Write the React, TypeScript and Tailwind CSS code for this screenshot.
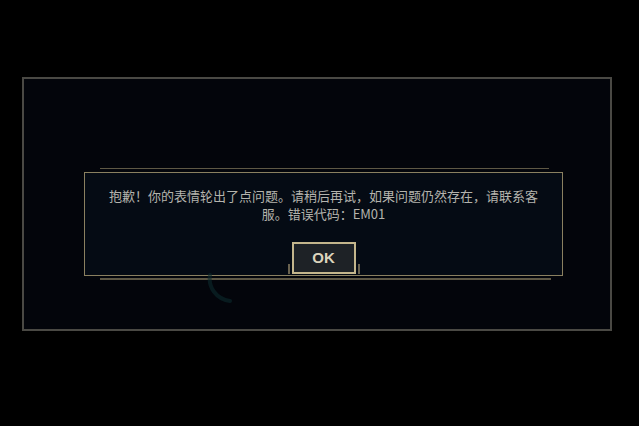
export default function App() {
  return (
    <div className="w-[639px] h-[426px] bg-black pt-[77px] pl-[22px] font-['Noto_Sans_CJK_SC','Noto_Sans',sans-serif]">
      {/* Outer frame */}
      <div className="relative w-[590px] h-[254px] border-2 border-[#4a4944] bg-[#03050b] pt-[89px] pl-[60px]">
        {/* faint teal arc in the background */}
        <svg className="absolute left-[180px] top-[194px]" width="40" height="36" viewBox="0 0 40 36">
          <path d="M6 2 C 4 14, 12 26, 26 28" fill="none" stroke="#0c2a2d" strokeWidth="4" strokeLinecap="round" opacity="0.6" />
        </svg>

        {/* Dialog */}
        <div className="w-[479px] flex flex-col gap-[3px]">
          <div className="h-px mx-[16px] mr-[14px] bg-[#5e5845]" />

          <div className="h-[104px] border border-[#8a8060] bg-[#050b14] pt-[14px] flex flex-col items-center">
            <p className="text-[13px] leading-[18px] text-[#b4b3ad] text-center">
              抱歉！你的表情轮出了点问题。请稍后再试，如果问题仍然存在，请联系客
              <br />
              服。错误代码：EM01
            </p>

            <div className="mt-[19px] flex items-end gap-[2px]">
              <div className="w-[2px] h-[10px] bg-[#6a6350]" />
              <button className="w-[64px] h-[32px] border-2 border-[#c4b68c] bg-[#1e2226] text-[15px] font-bold text-[#dcd4bc] flex items-center justify-center font-['Liberation_Sans',sans-serif]">
                OK
              </button>
              <div className="w-[2px] h-[10px] bg-[#6a6350]" />
            </div>
          </div>

          <div className="h-[2px] -mt-px ml-[16px] mr-[12px] bg-[#5e5845]" />
        </div>
      </div>
    </div>
  );
}
